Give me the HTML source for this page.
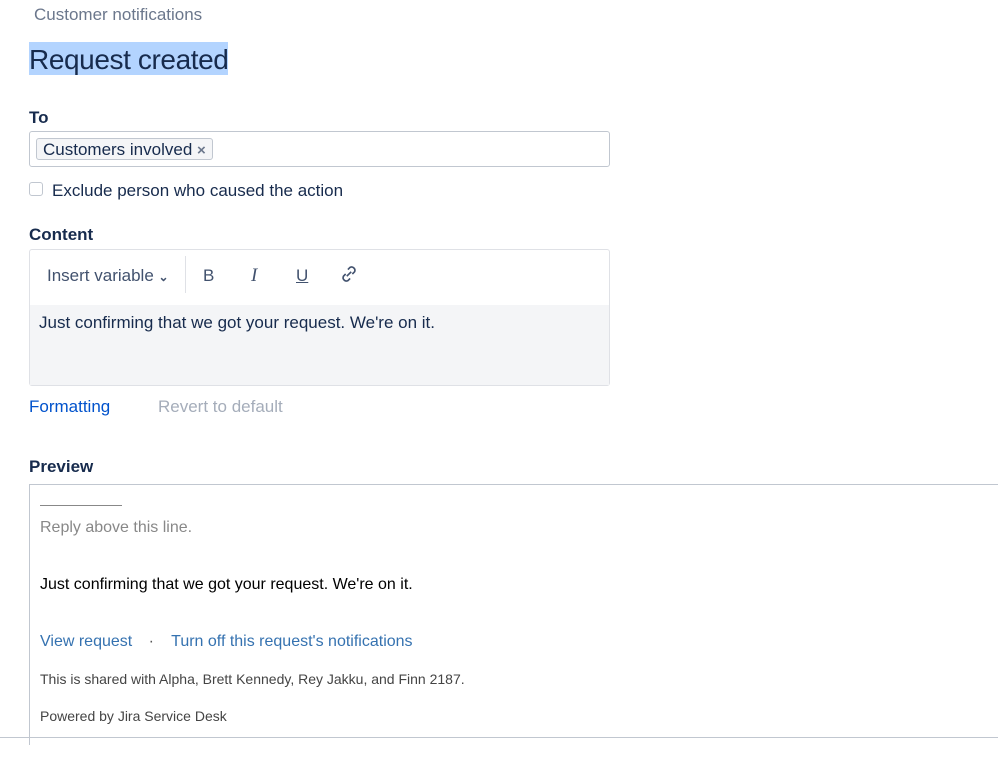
<!DOCTYPE html>
<html><head><style>
body{margin:0;width:998px;height:775px;overflow:hidden;background:#fff;font-family:"Liberation Sans",sans-serif;position:relative;color:#172b4d}
.a{position:absolute;white-space:nowrap}
</style></head><body>
<div class="a" style="left:34px;top:5px;font-size:17px;color:#6b778c">Customer notifications</div>
<div class="a" style="left:29px;top:42px;height:33px;width:199px;background:#b3d4ff"></div>
<div class="a" style="left:29px;top:44px;font-size:28px;color:#172b4d;letter-spacing:-0.4px">Request created</div>
<div class="a" style="left:29px;top:108px;font-size:17px;font-weight:bold">To</div>
<div class="a" style="left:29px;top:131px;width:579px;height:34px;border:1px solid #c1c7d0;border-radius:3px"></div>
<div class="a" style="left:36px;top:138px;width:175px;height:20px;border:1px solid #c1c7d0;border-radius:3px;background:#f4f5f7"></div>
<div class="a" style="left:43px;top:140px;font-size:17px;color:#172b4d">Customers involved <span style="color:#6b778c;font-weight:bold;font-size:15px">×</span></div>
<div class="a" style="left:29px;top:182px;width:12px;height:12px;border:1px solid #c1c7d0;border-radius:3px"></div>
<div class="a" style="left:52px;top:181px;font-size:17px">Exclude person who caused the action</div>
<div class="a" style="left:29px;top:225px;font-size:17px;font-weight:bold">Content</div>
<div class="a" style="left:29px;top:249px;width:579px;height:135px;border:1px solid #dfe1e6;border-radius:3px"></div>
<div class="a" style="left:30px;top:305px;width:579px;height:80px;background:#f4f5f7"></div>
<div class="a" style="left:47px;top:266px;font-size:17px;color:#42526e">Insert variable <span style="font-size:12px;font-weight:bold">&#8964;</span></div>
<div class="a" style="left:185px;top:256px;width:1px;height:37px;background:#dfe1e6"></div>
<div class="a" style="left:203px;top:266px;font-size:17px;color:#42526e">B</div>
<div class="a" style="left:251px;top:265px;font-size:19px;font-style:italic;font-family:'Liberation Serif',serif;color:#42526e">I</div>
<div class="a" style="left:296px;top:266px;font-size:17px;text-decoration:underline;color:#42526e">U</div>
<svg class="a" style="left:339px;top:264px" width="20" height="20" viewBox="0 0 18 18" fill="none" stroke="#42526e" stroke-width="1.5"><path d="M7 11l4-4M8 5l2-2a3 3 0 0 1 4 4l-2 2M10 13l-2 2a3 3 0 0 1-4-4l2-2"/></svg>
<div class="a" style="left:39px;top:313px;font-size:17px">Just confirming that we got your request. We're on it.</div>
<div class="a" style="left:29px;top:397px;font-size:17px;color:#0052cc">Formatting</div>
<div class="a" style="left:158px;top:397px;font-size:17px;color:#a5adba">Revert to default</div>
<div class="a" style="left:29px;top:457px;font-size:17px;font-weight:bold">Preview</div>
<div class="a" style="left:29px;top:484px;width:990px;height:260px;border:1px solid #c1c7d0;border-bottom:none"></div>
<div class="a" style="left:0;top:737px;width:998px;height:1px;background:#c1c7d0"></div>
<div class="a" style="left:40px;top:505px;width:82px;height:1px;background:#888"></div>
<div class="a" style="left:40px;top:519px;font-size:16px;color:#888">Reply above this line.</div>
<div class="a" style="left:40px;top:576px;font-size:16px;color:#000">Just confirming that we got your request. We're on it.</div>
<div class="a" style="left:40px;top:633px;font-size:16px;color:#3572b0">View request <span style="color:#555;margin:0 13px 0 12px">·</span> Turn off this request's notifications</div>
<div class="a" style="left:40px;top:671px;font-size:14px;color:#444">This is shared with Alpha, Brett Kennedy, Rey Jakku, and Finn 2187.</div>
<div class="a" style="left:40px;top:708px;font-size:14px;color:#444">Powered by Jira Service Desk</div>
</body></html>
